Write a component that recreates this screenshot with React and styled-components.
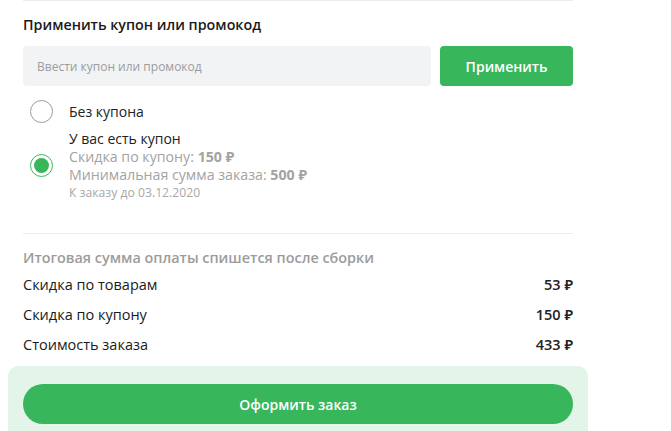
import React from "react";
import styled, { createGlobalStyle } from "styled-components";

const Global = createGlobalStyle`
  html, body { margin: 0; padding: 0; background: #fff; }
  body { font-family: "Open Sans", "Noto Sans", sans-serif; color: #1f1f1f; }
  * { box-sizing: border-box; }
`;

const Page = styled.div`
  width: 580px;
  margin-left: 8px;
`;

const Section = styled.section`
  padding: 0 15px;
`;

const Divider = styled.div`
  height: 1px;
  background: #ececec;
`;

const Heading = styled.h2`
  margin: 0;
  padding-top: 14px;
  height: 45px;
  font-size: 14.3px;
  font-weight: 600;
  line-height: 20px;
  color: #1a1a1a;
`;

const CouponForm = styled.div`
  display: flex;
  gap: 9px;
  height: 40px;
`;

const Input = styled.input`
  flex: 1;
  border: none;
  border-radius: 4px;
  background: #f2f3f5;
  padding: 0 14px;
  font-family: inherit;
  font-size: 12px;
  color: #333;
  outline: none;
  &::placeholder { color: #9a9ca0; }
`;

const ApplyButton = styled.button`
  width: 133px;
  border: none;
  border-radius: 4px;
  background: #37b65c;
  color: #fff;
  font-family: inherit;
  font-weight: 600;
  font-size: 14px;
  cursor: pointer;
`;

const RadioList = styled.div`
  display: flex;
  flex-direction: column;
  padding: 14px 0 0 7px;
  gap: 6px;
`;

const RadioRow = styled.label`
  display: flex;
  align-items: center;
  gap: 16px;
`;

const Radio = styled.span`
  flex: none;
  width: 23px;
  height: 23px;
  border-radius: 50%;
  border: 1px solid ${(p) => (p.$checked ? "#3cb860" : "#9b9b9b")};
  display: flex;
  align-items: center;
  justify-content: center;
  &::after {
    content: "";
    width: 15px;
    height: 15px;
    border-radius: 50%;
    background: ${(p) => (p.$checked ? "#37b65c" : "transparent")};
  }
`;

const RadioText = styled.div`
  display: flex;
  flex-direction: column;
`;

const Label = styled.span`
  font-size: 14px;
  line-height: 19px;
  color: #222;
`;

const Meta = styled.span`
  font-size: 14.2px;
  line-height: 18px;
  color: #a3a3a3;
  b { font-weight: 700; color: #a3a3a3; }
`;

const Small = styled.span`
  font-size: 12.2px;
  line-height: 18px;
  color: #a8a8a8;
`;

const SummaryDivider = styled(Divider)`
  margin-top: 31px;
`;

const SummaryTitle = styled.div`
  padding-top: 14px;
  font-size: 14.4px;
  font-weight: 600;
  line-height: 20px;
  color: #9c9c9c;
`;

const Rows = styled.div`
  margin-top: 1px;
`;

const Row = styled.div`
  display: flex;
  justify-content: space-between;
  align-items: center;
  height: 30px;
  font-size: 14.5px;
  color: #1a1a1a;
`;

const Amount = styled.span`
  font-weight: 600;
  color: #222;
`;

const Footer = styled.div`
  margin-top: 7px;
  background: #e3f5e9;
  border-radius: 10px 10px 0 0;
  padding: 18px 15px 14px;
`;

const OrderButton = styled.button`
  width: 100%;
  height: 40px;
  border: none;
  border-radius: 20px;
  background: #37b65c;
  color: #fff;
  font-family: inherit;
  font-weight: 600;
  font-size: 14px;
  cursor: pointer;
`;

export default function App() {
  return (
    <>
      <Global />
      <Page>
        <Section>
          <Divider />
          <Heading>Применить купон или промокод</Heading>
          <CouponForm>
            <Input placeholder="Ввести купон или промокод" />
            <ApplyButton>Применить</ApplyButton>
          </CouponForm>
          <RadioList>
            <RadioRow>
              <Radio />
              <RadioText>
                <Label>Без купона</Label>
              </RadioText>
            </RadioRow>
            <RadioRow>
              <Radio $checked />
              <RadioText>
                <Label>У вас есть купон</Label>
                <Meta>
                  Скидка по купону: <b>150 ₽</b>
                </Meta>
                <Meta>
                  Минимальная сумма заказа: <b>500 ₽</b>
                </Meta>
                <Small>К заказу до 03.12.2020</Small>
              </RadioText>
            </RadioRow>
          </RadioList>
          <SummaryDivider />
          <SummaryTitle>Итоговая сумма оплаты спишется после сборки</SummaryTitle>
          <Rows>
            <Row>
              <span>Скидка по товарам</span>
              <Amount>53 ₽</Amount>
            </Row>
            <Row>
              <span>Скидка по купону</span>
              <Amount>150 ₽</Amount>
            </Row>
            <Row>
              <span>Стоимость заказа</span>
              <Amount>433 ₽</Amount>
            </Row>
          </Rows>
        </Section>
        <Footer>
          <OrderButton>Оформить заказ</OrderButton>
        </Footer>
      </Page>
    </>
  );
}
